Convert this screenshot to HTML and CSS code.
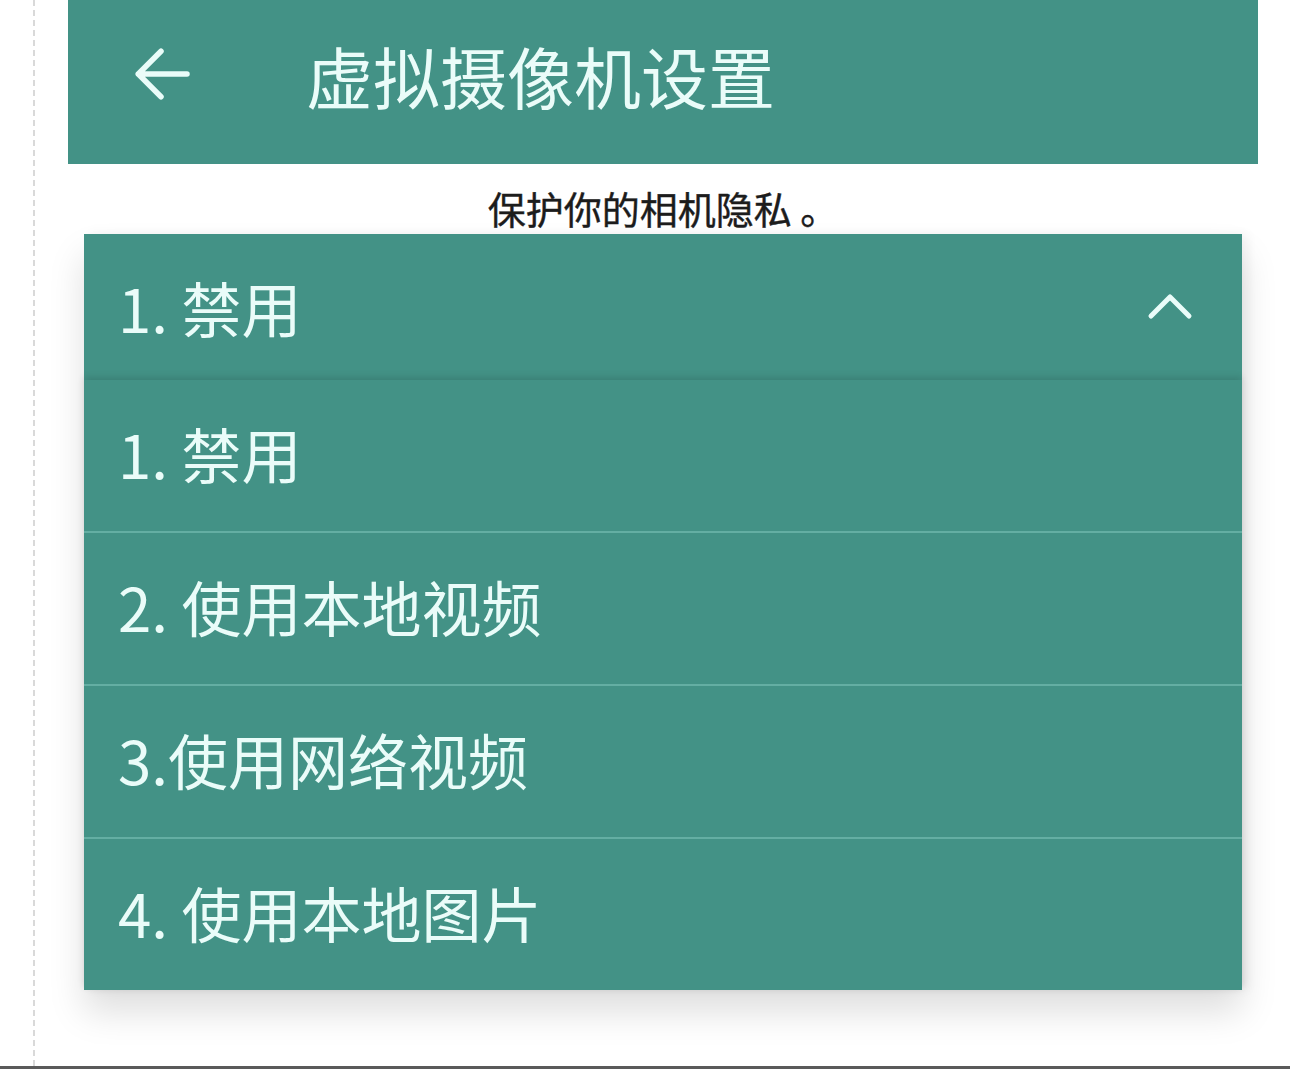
FILE: index.html
```html
<!DOCTYPE html>
<html lang="zh-CN">
<head>
    <meta charset="UTF-8">
    <meta name="viewport" content="width=device-width, initial-scale=1.0">
    <title>虚拟摄像机设置</title>
    <link rel="stylesheet" href="styles.css">
</head>
<body>
    <div class="screen">
        <div class="rail"></div>
        <div class="content">
            <!-- Toolbar -->
            <header class="toolbar">
                <svg class="back" viewBox="0 0 24 24" width="78" height="78">
                    <path d="M20 12H5M12 5l-7 7 7 7" fill="none" stroke="#eafcf9" stroke-width="1.7" stroke-linecap="round" stroke-linejoin="round"/>
                </svg>
                <h1 class="title">虚拟摄像机设置</h1>
            </header>

            <p class="hint">保护你的相机隐私 。</p>

            <!-- Spinner, opened -->
            <div class="dropdown">
                <div class="selected">
                    <span>1. 禁用</span>
                    <svg class="chevron" viewBox="0 0 48 30" width="48" height="30">
                        <polyline points="5,25 24,6 43,25" fill="none" stroke="#eafcf9" stroke-width="5" stroke-linecap="round" stroke-linejoin="round"/>
                    </svg>
                </div>
                <ul class="options">
                    <li>1. 禁用</li>
                    <li>2. 使用本地视频</li>
                    <li>3.使用网络视频</li>
                    <li>4. 使用本地图片</li>
                </ul>
            </div>
        </div>
    </div>
</body>
</html>
```

FILE: styles.css
```css
body {
    margin: 0;
    background-color: #fff;
    font-family: "Noto Sans CJK SC", "Noto Sans", sans-serif;
    overflow: hidden;
}

.screen {
    display: flex;
    height: 1066px;
    border-bottom: 3px solid #5a5a5a;
}

.rail {
    width: 33px;
    border-right: 2px dashed #d9d9d9;
}

.content {
    flex: 1;
    padding: 0 32px 0 33px;
}

/* Toolbar */
.toolbar {
    height: 148px;
    padding-bottom: 16px;
    background-color: #439286;
    display: flex;
    align-items: center;
    padding-left: 54px;
}

.back {
    display: block;
}

.title {
    margin: 0 0 0 106px;
    font-size: 67px;
    font-weight: normal;
    color: #eafcf9;
    line-height: 1;
}

.hint {
    margin: 0;
    padding-top: 18px;
    height: 52px;
    line-height: 52px;
    text-align: center;
    font-size: 38px;
    color: #1c1c1c;
    -webkit-text-stroke: 0.4px #1c1c1c;
}

/* Dropdown */
.dropdown {
    margin: 0 16px;
    background-color: #439286;
    color: #eafcf9;
    font-size: 60px;
    box-shadow: 0 22px 34px rgba(0, 0, 0, 0.13), 6px 0 10px rgba(0, 0, 0, 0.05);
}

.selected {
    height: 144px;
    padding: 0 48px 2px 34px;
    display: flex;
    align-items: center;
    justify-content: space-between;
}

.chevron {
    display: block;
}

.options {
    list-style: none;
    margin: 0;
    padding: 0;
    position: relative;
    box-shadow: 0 -3px 7px rgba(0, 0, 0, 0.12);
}

.options li {
    height: 153px;
    line-height: 145px;
    padding-left: 34px;
    border-bottom: 2px solid #64aea3;
    box-sizing: border-box;
}

.options li:last-child {
    border-bottom: none;
    height: 151px;
}
```
